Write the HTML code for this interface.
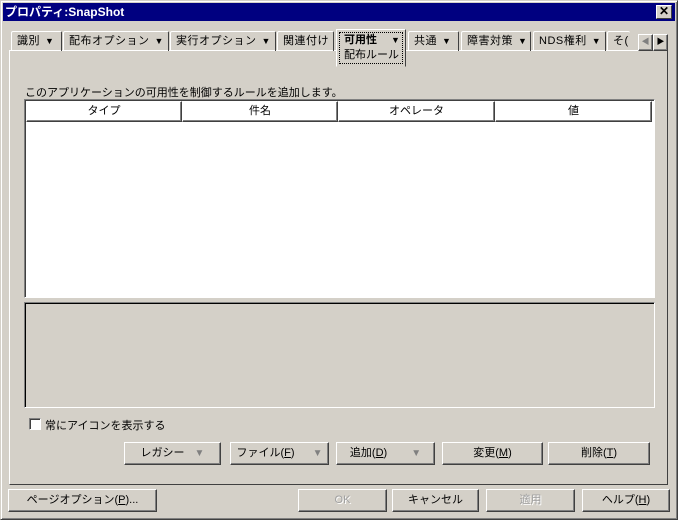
<!DOCTYPE html><html><head><meta charset="utf-8"><style>
*{box-sizing:border-box;margin:0;padding:0}
body{width:678px;height:520px;background:#d4d0c8;position:relative;overflow:hidden;font-family:"Liberation Sans","Noto Sans CJK JP",sans-serif;font-size:12px;color:#000}
.a{position:absolute}
.win{left:0;top:0;width:678px;height:520px;border:1px solid;border-color:#d4d0c8 #404040 #404040 #d4d0c8;box-shadow:inset 1px 1px #fff,inset -1px -1px #808080}
.title{left:3px;top:3px;width:672px;height:18px;background:#000080;color:#fff;font-weight:bold;font-size:12px;line-height:18px;padding-left:2px}
.x{left:656px;top:5px;width:16px;height:14px;background:#d4d0c8;border:1px solid;border-color:#fff #404040 #404040 #fff;color:#000;font-size:12px;line-height:11px;text-align:center;font-weight:bold}
.tab{top:31px;height:20px;border:1px solid;border-bottom:none;border-color:#fff #404040 #fff #fff;border-radius:2px 2px 0 0;line-height:18px;padding-left:5px;white-space:nowrap;overflow:hidden;font-size:11px;letter-spacing:0.5px}
.tab i{font-style:normal;font-size:9px;margin-left:5px}
.panel{left:9px;top:50px;width:659px;height:435px;border:1px solid;border-color:#fff #404040 #404040 #fff}
.btn{height:23px;border:1px solid;border-color:#fff #404040 #404040 #fff;box-shadow:inset -1px -1px #808080;text-align:center;line-height:21px;font-size:11px;white-space:nowrap}
.hd{top:101px;height:21px;border:1px solid;border-color:#fff #404040 #404040 #fff;box-shadow:inset -1px -1px #808080;text-align:center;line-height:19px;font-size:11px}
.dis{color:#a0a0a0;text-shadow:1px 1px #fff}
.arr{color:#808080;font-size:10px;margin-left:10px}
</style></head><body>
<div class="a win"></div>
<div class="a title">プロパティ:SnapShot</div>
<div class="a x">✕</div>
<div class="a panel"></div>
<div class="a tab" style="left:11px;width:51px">識別<i>▼</i></div>
<div class="a tab" style="left:63px;width:106px">配布オプション<i>▼</i></div>
<div class="a tab" style="left:170px;width:106px">実行オプション<i>▼</i></div>
<div class="a tab" style="left:277px;width:57px">関連付け</div>
<div class="a" style="left:336px;top:29px;width:70px;height:38px;background:#d4d0c8;border:1px solid;border-color:#fff #404040 #d4d0c8 #fff"><div style="position:absolute;left:2px;top:2px;width:64px;height:32px;border:1px dotted #000;padding-left:4px;line-height:15px;white-space:nowrap;font-size:11px"><b>可用性</b><span style="font-size:9px;margin-left:14px">▼</span><br>配布ルール</div></div>
<div class="a tab" style="left:408px;width:51px">共通<i>▼</i></div>
<div class="a tab" style="left:461px;width:70px">障害対策<i>▼</i></div>
<div class="a tab" style="left:533px;width:73px">NDS権利<i>▼</i></div>
<div class="a tab" style="left:607px;width:23px;border-right:none">そ(</div>
<div class="a btn" style="left:638px;top:34px;width:15px;height:17px;line-height:14px;font-size:8px;color:#808080">◀</div>
<div class="a btn" style="left:653px;top:34px;width:15px;height:17px;line-height:14px;font-size:8px">▶</div>
<div class="a" style="left:25px;top:84px;font-size:11px">このアプリケーションの可用性を制御するルールを追加します。</div>
<div class="a" style="left:24px;top:99px;width:631px;height:199px;background:#fff;border:1px solid;border-color:#808080 #fff #fff #808080;box-shadow:inset 1px 1px #404040"></div>
<div class="a hd" style="left:26px;width:156px">タイプ</div>
<div class="a hd" style="left:182px;width:156px">件名</div>
<div class="a hd" style="left:338px;width:157px">オペレータ</div>
<div class="a hd" style="left:495px;width:157px">値</div>
<div class="a" style="left:24px;top:302px;width:631px;height:106px;border:1px solid;border-color:#808080 #fff #fff #808080;box-shadow:inset 1px 1px #000"></div>
<div class="a" style="left:29px;top:418px;width:12px;height:12px;background:#fff;border:1px solid;border-color:#808080 #fff #fff #808080;box-shadow:inset 1px 1px #404040"></div>
<div class="a" style="left:45px;top:417px;font-size:11px">常にアイコンを表示する</div>
<div class="a btn" style="left:124px;top:442px;width:97px">レガシー<span class="arr">▼</span></div>
<div class="a btn" style="left:230px;top:442px;width:99px">ファイル(<u>F</u>)<span class="arr" style="margin-left:18px">▼</span></div>
<div class="a btn" style="left:336px;top:442px;width:99px">追加(<u>D</u>)<span class="arr" style="margin-left:24px">▼</span></div>
<div class="a btn" style="left:442px;top:442px;width:101px">変更(<u>M</u>)</div>
<div class="a btn" style="left:548px;top:442px;width:102px">削除(<u>T</u>)</div>
<div class="a btn" style="left:8px;top:489px;width:149px">ページオプション(<u>P</u>)...</div>
<div class="a btn dis" style="left:298px;top:489px;width:89px">OK</div>
<div class="a btn" style="left:392px;top:489px;width:87px">キャンセル</div>
<div class="a btn dis" style="left:486px;top:489px;width:89px">適用</div>
<div class="a btn" style="left:582px;top:489px;width:88px">ヘルプ(<u>H</u>)</div>
</body></html>
